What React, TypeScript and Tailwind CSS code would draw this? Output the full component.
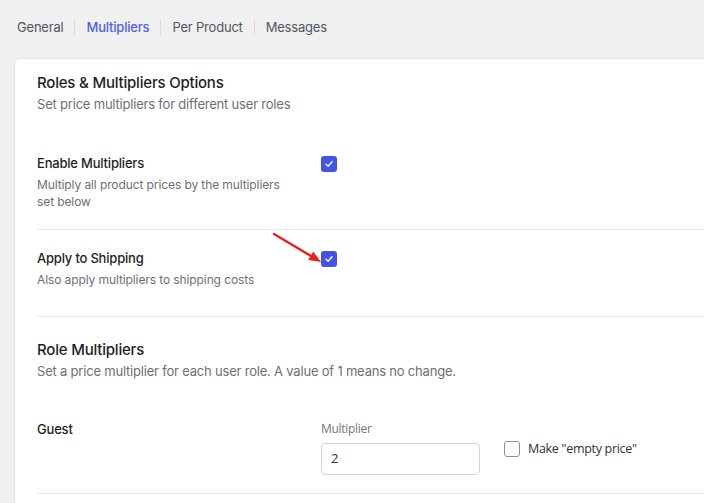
import React from "react";

function Check({ checked }: { checked: boolean }) {
  if (checked) {
    return (
      <span className="flex h-4 w-4 items-center justify-center rounded-[3px] bg-[#4353e6]">
        <svg width="10" height="10" viewBox="0 0 10 10" fill="none">
          <path d="M2 5.2 L4.1 7.2 L8 2.8" stroke="#fff" strokeWidth="1.4" strokeLinecap="round" strokeLinejoin="round" />
        </svg>
      </span>
    );
  }
  return <span className="block h-4 w-4 rounded-[3px] border border-[#8c8f94] bg-white" />;
}

export default function App() {
  const tabs = ["General", "Multipliers", "Per Product", "Messages"];
  return (
    <div className="relative h-[503px] w-[704px] overflow-hidden bg-[#f0f0f1] font-['Inter',sans-serif] text-[13px] tracking-[-0.2px]">
      <div className="flex items-center pl-[17px] pt-[17px]">
        {tabs.map((t, i) => (
          <div key={t} className="flex items-center">
            {i > 0 && <span className="mx-[11px] h-[17px] w-px bg-[#dcdcde]" />}
            <span className={i === 1 ? "font-medium leading-5 text-[#4f5ee9]" : "leading-5 text-[#50575e]"}>{t}</span>
          </div>
        ))}
      </div>
      <div className="ml-[14px] mt-[21px] w-[760px] rounded-[5px] border border-[#e2e4e7] bg-white pb-[40px] pl-[22px] pt-[13px] shadow-[0_1px_2px_rgba(0,0,0,0.04)]">
        <h2 className="text-[15px] font-medium leading-[22px] text-[#1e1e1e]">Roles &amp; Multipliers Options</h2>
        <p className="leading-5 text-[#6c7075]">Set price multipliers for different user roles</p>

        <div className="mt-[39px] flex pb-[19px]">
          <div className="w-[284px]">
            <div className="font-medium leading-5 text-[#1e1e1e]">Enable Multipliers</div>
            <div className="mt-[3px] w-[255px] text-[12px] leading-[17px] tracking-[-0.1px] text-[#6c7075]">
              Multiply all product prices by the multipliers set below
            </div>
          </div>
          <div className="pt-[3px]"><Check checked /></div>
        </div>
        <div className="h-px bg-[#e8e8ea]" />

        <div className="relative flex pb-[28px] pt-[18px]">
          <div className="w-[284px]">
            <div className="font-medium leading-5 text-[#1e1e1e]">Apply to Shipping</div>
            <div className="mt-[3px] text-[12px] leading-[17px] tracking-[-0.1px] text-[#6c7075]">Also apply multipliers to shipping costs</div>
          </div>
          <div className="pt-[3px]"><Check checked /></div>
          <svg className="absolute left-[236px] top-[2px]" width="52" height="34" viewBox="0 0 52 34" fill="none">
            <path d="M1 2 L38 24" stroke="#e8221b" strokeWidth="2.4" strokeLinecap="round" />
            <path d="M48 30 L35.2 28 L40.2 19.6 Z" fill="#e8221b" />
          </svg>
        </div>
        <div className="h-px bg-[#e8e8ea]" />

        <h2 className="mt-[22px] text-[15px] font-medium leading-[22px] text-[#1e1e1e]">Role Multipliers</h2>
        <p className="leading-5 text-[#6c7075]">Set a price multiplier for each user role. A value of 1 means no change.</p>

        <div className="mt-[38px] flex pb-[18px]">
          <div className="w-[284px] font-medium leading-5 text-[#1e1e1e]">Guest</div>
          <div className="flex flex-col">
            <span className="font-['Open_Sans',sans-serif] text-[12px] leading-5 tracking-[-0.3px] text-[#757575]">Multiplier</span>
            <div className="mt-[4px] flex h-[32px] w-[159px] items-center rounded-[4px] border border-[#d4d4d8] px-[9px] font-['Open_Sans',sans-serif] text-[13px] text-[#2c3338]">2</div>
          </div>
          <div className="ml-[24px] mt-[22px] flex h-4 items-center gap-[8px]">
            <Check checked={false} />
            <span className="font-['Open_Sans',sans-serif] text-[12.5px] tracking-[-0.3px] text-[#2c3338]">Make "empty price"</span>
          </div>
        </div>
        <div className="h-px bg-[#e8e8ea]" />
      </div>
    </div>
  );
}
